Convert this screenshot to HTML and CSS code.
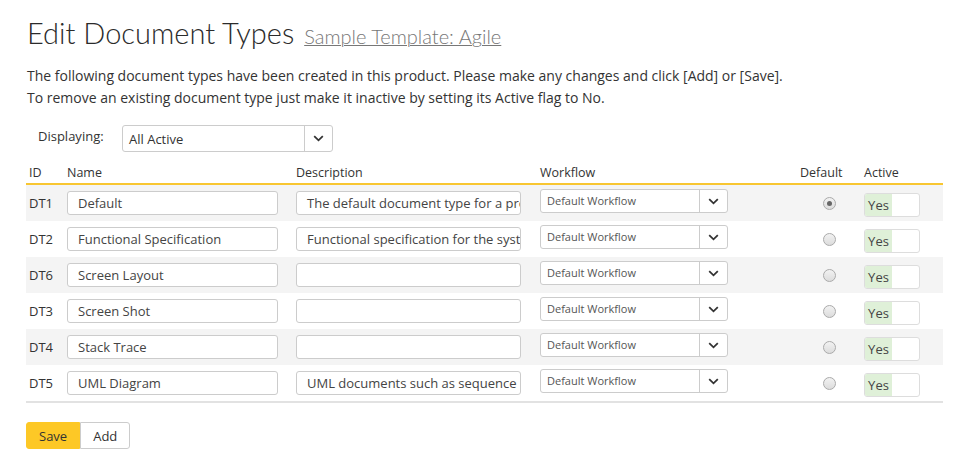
FILE: index.html
```html
<!DOCTYPE html>
<html>
<head>
<meta charset="utf-8">
<link rel="stylesheet" href="styles.css">
</head>
<body>
<div class="page">
  <h1 class="title">Edit Document Types <a class="subtitle" href="#">Sample Template: Agile</a></h1>
  <p class="intro">The following document types have been created in this product. Please make any changes and click [Add] or [Save].<br>To remove an existing document type just make it inactive by setting its Active flag to No.</p>

  <div class="filter">
    <span class="filter-label">Displaying:</span>
    <div class="select select-lg"><span class="select-text">All Active</span><span class="select-btn"><svg width="11" height="7" viewBox="0 0 11 7"><path d="M1.2 1.2 L5.5 5.3 L9.8 1.2" fill="none" stroke="#333" stroke-width="1.8"/></svg></span></div>
  </div>

  <div class="table">
    <div class="row head">
      <div class="c-id">ID</div>
      <div class="c-name">Name</div>
      <div class="c-desc">Description</div>
      <div class="c-wf">Workflow</div>
      <div class="c-defh">Default</div>
      <div class="c-act">Active</div>
    </div>

    <div class="row alt">
      <div class="c-id">DT1</div>
      <div class="c-name"><div class="input">Default</div></div>
      <div class="c-desc"><div class="input">The default document type for a product</div></div>
      <div class="c-wf"><div class="select"><span class="select-text">Default Workflow</span><span class="select-btn"><svg width="11" height="7" viewBox="0 0 11 7"><path d="M1.2 1.2 L5.5 5.3 L9.8 1.2" fill="none" stroke="#333" stroke-width="1.8"/></svg></span></div></div>
      <div class="c-def"><span class="radio checked"></span></div>
      <div class="c-act"><div class="toggle"><span class="yes">Yes</span><span class="no"></span></div></div>
    </div>

    <div class="row">
      <div class="c-id">DT2</div>
      <div class="c-name"><div class="input">Functional Specification</div></div>
      <div class="c-desc"><div class="input">Functional specification for the system</div></div>
      <div class="c-wf"><div class="select"><span class="select-text">Default Workflow</span><span class="select-btn"><svg width="11" height="7" viewBox="0 0 11 7"><path d="M1.2 1.2 L5.5 5.3 L9.8 1.2" fill="none" stroke="#333" stroke-width="1.8"/></svg></span></div></div>
      <div class="c-def"><span class="radio"></span></div>
      <div class="c-act"><div class="toggle"><span class="yes">Yes</span><span class="no"></span></div></div>
    </div>

    <div class="row alt">
      <div class="c-id">DT6</div>
      <div class="c-name"><div class="input">Screen Layout</div></div>
      <div class="c-desc"><div class="input"></div></div>
      <div class="c-wf"><div class="select"><span class="select-text">Default Workflow</span><span class="select-btn"><svg width="11" height="7" viewBox="0 0 11 7"><path d="M1.2 1.2 L5.5 5.3 L9.8 1.2" fill="none" stroke="#333" stroke-width="1.8"/></svg></span></div></div>
      <div class="c-def"><span class="radio"></span></div>
      <div class="c-act"><div class="toggle"><span class="yes">Yes</span><span class="no"></span></div></div>
    </div>

    <div class="row">
      <div class="c-id">DT3</div>
      <div class="c-name"><div class="input">Screen Shot</div></div>
      <div class="c-desc"><div class="input"></div></div>
      <div class="c-wf"><div class="select"><span class="select-text">Default Workflow</span><span class="select-btn"><svg width="11" height="7" viewBox="0 0 11 7"><path d="M1.2 1.2 L5.5 5.3 L9.8 1.2" fill="none" stroke="#333" stroke-width="1.8"/></svg></span></div></div>
      <div class="c-def"><span class="radio"></span></div>
      <div class="c-act"><div class="toggle"><span class="yes">Yes</span><span class="no"></span></div></div>
    </div>

    <div class="row alt">
      <div class="c-id">DT4</div>
      <div class="c-name"><div class="input">Stack Trace</div></div>
      <div class="c-desc"><div class="input"></div></div>
      <div class="c-wf"><div class="select"><span class="select-text">Default Workflow</span><span class="select-btn"><svg width="11" height="7" viewBox="0 0 11 7"><path d="M1.2 1.2 L5.5 5.3 L9.8 1.2" fill="none" stroke="#333" stroke-width="1.8"/></svg></span></div></div>
      <div class="c-def"><span class="radio"></span></div>
      <div class="c-act"><div class="toggle"><span class="yes">Yes</span><span class="no"></span></div></div>
    </div>

    <div class="row">
      <div class="c-id">DT5</div>
      <div class="c-name"><div class="input">UML Diagram</div></div>
      <div class="c-desc"><div class="input">UML documents such as sequence diagrams</div></div>
      <div class="c-wf"><div class="select"><span class="select-text">Default Workflow</span><span class="select-btn"><svg width="11" height="7" viewBox="0 0 11 7"><path d="M1.2 1.2 L5.5 5.3 L9.8 1.2" fill="none" stroke="#333" stroke-width="1.8"/></svg></span></div></div>
      <div class="c-def"><span class="radio"></span></div>
      <div class="c-act"><div class="toggle"><span class="yes">Yes</span><span class="no"></span></div></div>
    </div>
  </div>

  <div class="buttons">
    <button class="btn btn-primary">Save</button><button class="btn">Add</button>
  </div>
</div>
</body>
</html>
```

FILE: styles.css
```css
* { box-sizing: border-box; }
html, body { margin: 0; padding: 0; background: #fff; }
body {
  font-family: "Open Sans", "Liberation Sans", sans-serif;
  font-size: 13px;
  color: #333;
}
.page { padding: 0 33px 0 26px; }

.title {
  margin: 0;
  padding-top: 15px;
  font-family: "Lato", sans-serif;
  font-weight: 300;
  font-size: 29px;
  line-height: 36px;
  color: #2b2b2b;
  padding-left: 1px;
}
.subtitle {
  font-size: 20px;
  color: #777;
  text-decoration: underline;
  text-decoration-thickness: 1px;
  margin-left: 2px;
}

.intro {
  margin: 11px 0 0 1px;
  line-height: 22px;
  font-size: 14px;
}

.filter {
  display: flex;
  align-items: center;
  margin-top: 16px;
  padding-left: 12px;
  height: 27px;
}
.filter-label { width: 84px; font-size: 13px; margin-top: -6px; }

.select {
  display: flex;
  align-items: stretch;
  width: 188px;
  height: 24px;
  border: 1px solid #ccc;
  border-radius: 3px;
  background: #fff;
}
.select-lg { width: 211px; height: 27px; }
.select-text {
  flex: 1;
  display: flex;
  align-items: center;
  padding-left: 6px;
  font-size: 11px;
  line-height: 14px;
  color: #555;
  white-space: nowrap;
  overflow: hidden;
  min-width: 0;
}
.select-lg .select-text { font-size: 13px; color: #333; }
.select-btn {
  width: 28px;
  flex: none;
  border-left: 1px solid #ccc;
  display: flex;
  align-items: center;
  justify-content: center;
}

.table {
  margin-top: 2px;
  border-bottom: 2px solid #e2e2e2;
}
.row {
  display: grid;
  grid-template-columns: 36px 229px 244px 260px 64px 84px;
  height: 36px;
  align-items: center;
}
.row.head {
  height: 31px;
  border-bottom: 2px solid #f8c631;
  font-size: 12.5px;
  color: #333;
  align-items: end;
  padding-bottom: 2px;
}
.row.alt { background: #f4f4f4; }
.row > div { padding-left: 5px; min-width: 0; }
.row > .c-id { padding-left: 3px; }
.row:not(.head) .c-wf .select { margin-top: -4px; }

.input {
  height: 24px;
  border: 1px solid #ccc;
  border-radius: 3px;
  background: #fff;
  padding-left: 10px;
  line-height: 22px;
  white-space: nowrap;
  overflow: hidden;
  text-overflow: clip;
  font-size: 13px;
  color: #444;
}
.c-name .input { width: 211px; }
.c-desc .input { width: 225px; }

.row > .c-def { display: flex; justify-content: center; padding-left: 0; }
.radio {
  display: inline-block;
  width: 13px; height: 13px;
  border-radius: 50%;
  border: 1px solid #aaa;
  background: linear-gradient(#f2f2f2, #dcdcdc);
  position: relative;
  margin-left: 5px;
}
.radio.checked::after {
  content: "";
  position: absolute;
  left: 3px; top: 3px;
  width: 5px; height: 5px;
  border-radius: 50%;
  background: #666;
}

.toggle {
  display: flex;
  width: 56px;
  height: 24px;
  border: 1px solid #ddd;
  border-radius: 3px;
  overflow: hidden;
  margin-top: 3px;
  background: #fff;
}
.toggle .yes {
  width: 27px;
  background: #dff0d8;
  display: flex;
  align-items: center;
  justify-content: center;
  font-size: 13px;
  color: #444;
}
.toggle .no { flex: 1; }

.buttons { margin-top: 19px; display: flex; }
.btn {
  font-family: "Open Sans", "Liberation Sans", sans-serif;
  font-size: 13px;
  height: 27px;
  padding: 0 12px;
  border: 1px solid #ccc;
  background: #fff;
  color: #333;
  border-radius: 0 3px 3px 0;
}
.btn-primary {
  background: #fdc826;
  border-color: #fdc826;
  border-radius: 3px 0 0 3px;
}
```
